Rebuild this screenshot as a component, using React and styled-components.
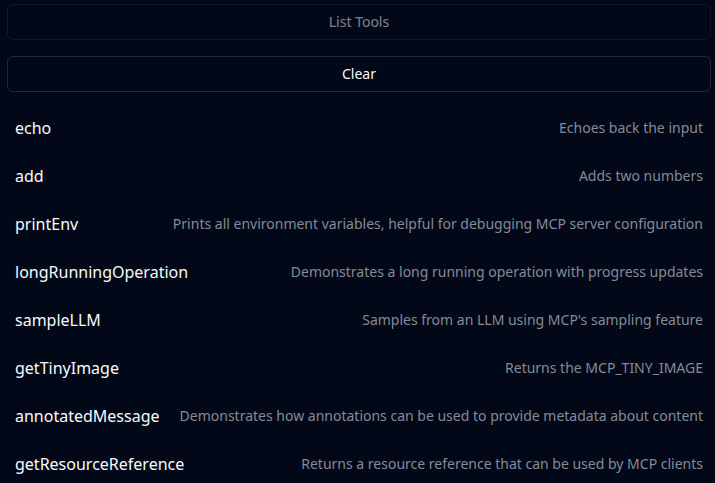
import React from "react";
import styled, { createGlobalStyle } from "styled-components";

const tools = [
	{ name: "echo", description: "Echoes back the input" },
	{ name: "add", description: "Adds two numbers" },
	{
		name: "printEnv",
		description:
			"Prints all environment variables, helpful for debugging MCP server configuration",
	},
	{
		name: "longRunningOperation",
		description: "Demonstrates a long running operation with progress updates",
	},
	{ name: "sampleLLM", description: "Samples from an LLM using MCP's sampling feature" },
	{ name: "getTinyImage", description: "Returns the MCP_TINY_IMAGE" },
	{
		name: "annotatedMessage",
		description:
			"Demonstrates how annotations can be used to provide metadata about content",
	},
	{
		name: "getResourceReference",
		description: "Returns a resource reference that can be used by MCP clients",
	},
];

const GlobalStyle = createGlobalStyle`
	html, body {
		margin: 0;
		padding: 0;
		background: #020817;
	}
	body {
		font-family: "Noto Sans", "Open Sans", sans-serif;
		color: #f8fafc;
	}
`;

export default function App() {
	return (
		<>
			<GlobalStyle />
			<Container>
				<Button disabled>List Tools</Button>
				<Button>Clear</Button>
				<ToolList>
					{tools.map(tool => (
						<ToolRow key={tool.name}>
							<ToolName>{tool.name}</ToolName>
							<ToolDescription>{tool.description}</ToolDescription>
						</ToolRow>
					))}
				</ToolList>
			</Container>
		</>
	);
}

const Container = styled.div`
	display: flex;
	flex-direction: column;
	gap: 16px;
	padding: 4px 4px 0 7px;
	min-height: 483px;
	box-sizing: border-box;
	background: #020817;
`;

const Button = styled.button`
	height: 36px;
	width: 100%;
	padding: 0 0 1px;
	border: 1px solid #1e293b;
	border-radius: 6px;
	background: transparent;
	font-family: inherit;
	font-size: 14px;
	font-weight: 400;
	color: #f8fafc;
	cursor: pointer;

	&:disabled {
		opacity: 0.5;
		cursor: default;
	}
`;

const ToolList = styled.div`
	display: flex;
	flex-direction: column;
	margin-top: -4px;
`;

const ToolRow = styled.div`
	display: flex;
	align-items: center;
	justify-content: space-between;
	gap: 16px;
	padding: 12px 8px;
	line-height: 24px;
`;

const ToolName = styled.span`
	font-size: 16px;
	color: #f8fafc;
	white-space: nowrap;
`;

const ToolDescription = styled.span`
	font-size: 14px;
	color: #858b98;
	text-align: right;
	white-space: nowrap;
`;
